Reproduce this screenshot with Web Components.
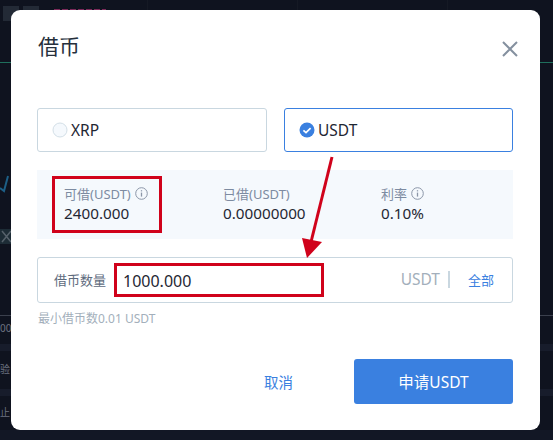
<!DOCTYPE html>
<html lang="zh">
<head>
<meta charset="utf-8">
<title>借币</title>
<style>
    html, body { margin: 0; padding: 0; background: #0f131f; }
    body { width: 553px; height: 440px; overflow: hidden; position: relative; font-family: "Noto Sans", "Noto Sans CJK SC", sans-serif; }
</style>
</head>
<body>
<trade-backdrop></trade-backdrop>
<borrow-dialog></borrow-dialog>

<script>
class TradeBackdrop extends HTMLElement {
    constructor() {
        super();
        this.shadow = this.attachShadow({ mode: 'open' });
    }

    connectedCallback() {
        this.shadow.innerHTML =
        `
        <style>
            :host {
                display: flex;
                flex-direction: column;
                width: 553px;
                height: 440px;
                overflow: hidden;
                background-color: #0f131f;
                background-image: linear-gradient(90deg, rgba(255,255,255,.025) 1px, transparent 1px);
                background-size: 150px 100%;
                background-position: 147px 0;
                font-family: "Noto Sans", "Noto Sans CJK SC", sans-serif;
                color: #6d7280;
            }
            .top { height: 62px; display: flex; gap: 4px; padding: 6px 0 0 3px; box-sizing: border-box; flex: none; }
            .tile { width: 16px; height: 15px; background: #232a36; }
            .price { margin-left: 11px; width: 52px; height: 3px; margin-top: 3px; background: repeating-linear-gradient(90deg, #7d2a5a 0 6px, transparent 6px 8px); }
            .green { height: 1px; background: #1f6f5c; flex: none; }
            .gap { flex: none; }
            .stroke { width: 11px; height: 20px; display: block; flex: none; }
            .xtile { width: 11px; height: 15px; display: block; flex: none; background: #1d2c36; }
            .rule { height: 1px; background: #3b404d; flex: none; }
            .band { height: 7px; background: #171c2b; flex: none; }
            .text { flex: none; font-size: 10px; line-height: 18px; white-space: nowrap; }
            .bottom { flex: 1; }
            .base { height: 10px; flex: none; background: #121725; }
        </style>
        <div class="top">
            <div class="tile"></div>
            <div class="tile"></div>
            <div class="price"></div>
        </div>
        <div class="green"></div>
        <div class="gap" style="height:110px"></div>
        <svg class="stroke" viewBox="0 0 11 20"><path d="M0 15 L4 18 L8 3" fill="none" stroke="#1d5f86" stroke-width="2"/></svg>
        <div class="gap" style="height:36px"></div>
        <svg class="xtile" viewBox="0 0 11 15"><path d="M2 2 L11 13 M11 2 L2 13" fill="none" stroke="#56616b" stroke-width="1.5"/></svg>
        <div class="gap" style="height:71px"></div>
        <div class="rule"></div>
        <div class="gap" style="height:3px"></div>
        <div class="text">00</div>
        <div class="gap" style="height:7px"></div>
        <div class="band"></div>
        <div class="gap" style="height:9px"></div>
        <div class="text">验</div>
        <div class="gap" style="height:11px"></div>
        <div class="band"></div>
        <div class="gap" style="height:7px"></div>
        <div class="text">止</div>
        <div class="bottom"></div>
        <div class="base"></div>`;
    }
}

class InfoIcon extends HTMLElement {
    constructor() {
        super();
        this.shadow = this.attachShadow({ mode: 'open' });
    }

    connectedCallback() {
        this.shadow.innerHTML =
        `
        <style>
            :host { display: inline-flex; width: 13px; height: 13px; margin-left: 4px; }
            svg { width: 13px; height: 13px; display: block; }
        </style>
        <svg viewBox="0 0 13 13" fill="none" stroke="#8b96a8">
            <circle cx="6.5" cy="6.5" r="5.8" stroke-width="1"/>
            <path d="M6.5 5.6V9.6" stroke-width="1.3"/>
            <path d="M6.5 3.2V4.4" stroke-width="1.3"/>
        </svg>`;
    }
}

class CoinCard extends HTMLElement {
    constructor() {
        super();
        this.shadow = this.attachShadow({ mode: 'open' });
    }

    connectedCallback() {
        const selected = this.hasAttribute('selected');
        const mark = selected
            ? `<svg viewBox="0 0 16 16"><circle cx="8" cy="8" r="7.5" fill="#3a80e0"/><path d="M4.4 8.3 L7 10.6 L11.6 6.2" fill="none" stroke="#fff" stroke-width="1.7"/></svg>`
            : `<svg viewBox="0 0 16 16"><circle cx="8" cy="8" r="7" fill="#f5f9fd" stroke="#d3dfe7"/></svg>`;

        this.shadow.innerHTML =
        `
        <style>
            :host {
                display: flex;
                align-items: center;
                box-sizing: border-box;
                height: 44px;
                padding-left: 14px;
                border: 1px solid ${selected ? '#3a80e0' : '#c9d7e0'};
                border-radius: 3px;
                background: #fff;
                color: #1f2733;
                font-size: 15.5px;
            }
            svg { width: 16px; height: 16px; margin-right: 3px; flex: none; }
        </style>
        ${mark}<slot></slot>`;
    }
}

class StatItem extends HTMLElement {
    constructor() {
        super();
        this.shadow = this.attachShadow({ mode: 'open' });
    }

    connectedCallback() {
        this.shadow.innerHTML =
        `
        <style>
            :host { display: block; }
            .label { display: flex; align-items: center; height: 20px; font-size: 13px; color: #7d8ba1; white-space: nowrap; }
            .value { height: 20px; line-height: 20px; font-size: 15.25px; color: #1f2733; white-space: nowrap; }
        </style>
        <div class="label"><slot name="label"></slot></div>
        <div class="value"><slot name="value"></slot></div>`;
    }
}

class AmountField extends HTMLElement {
    constructor() {
        super();
        this.shadow = this.attachShadow({ mode: 'open' });
    }

    connectedCallback() {
        this.shadow.innerHTML =
        `
        <style>
            :host {
                display: flex;
                align-items: center;
                box-sizing: border-box;
                height: 46px;
                padding: 0 18px 2px 16px;
                border: 1px solid #c9d7e0;
                border-radius: 3px;
                background: #fff;
            }
            .name { font-size: 13px; color: #5e6b7d; width: 69px; flex: none; white-space: nowrap; }
            .amount { flex: 1; font-size: 16px; color: #1f2733; margin-top: 4px; }
            .unit { font-size: 15.5px; color: #a3afbb; }
            .sep { width: 2px; height: 17px; background: #c9d7e0; margin: 0 18px 0 8px; }
            .all { font-size: 13px; color: #3a80e0; white-space: nowrap; }
        </style>
        <span class="name">借币数量</span>
        <span class="amount">1000.000</span>
        <span class="unit">USDT</span>
        <span class="sep"></span>
        <span class="all">全部</span>`;
    }
}

class BorrowDialog extends HTMLElement {
    constructor() {
        super();
        this.shadow = this.attachShadow({ mode: 'open' });
    }

    connectedCallback() {
        this.shadow.innerHTML =
        `
        <style>
            :host {
                position: absolute;
                left: 11px;
                top: 10px;
                box-sizing: border-box;
                width: 529px;
                height: 420px;
                padding: 0 27px 0 26px;
                background: #fff;
                border-radius: 9px;
                font-family: "Noto Sans", "Noto Sans CJK SC", sans-serif;
            }
            header {
                display: flex;
                justify-content: space-between;
                align-items: flex-start;
                height: 98px;
            }
            h2 { margin: 21px 0 0 1px; font-size: 21px; line-height: 30px; font-weight: 400; color: #262f3c; }
            .close { width: 16px; height: 16px; margin: 31px -5px 0 0; display: block; }
            .coins { display: grid; grid-template-columns: 230px 229px; gap: 17px; }
            .stats {
                display: grid;
                grid-template-columns: 159px 158px 1fr;
                box-sizing: border-box;
                height: 69px;
                margin-top: 18px;
                padding: 13px 0 0 27px;
                background: #f5f9fd;
            }
            amount-field { margin-top: 18px; }
            .hint { margin-top: 7px; padding-left: 1px; height: 18px; line-height: 18px; font-size: 12px; color: #a3afbb; white-space: nowrap; }
            footer { display: flex; justify-content: flex-end; align-items: center; margin-top: 31px; }
            .cancel { font-size: 14.5px; color: #3a80e0; margin-right: 61px; }
            .apply {
                display: flex;
                align-items: center;
                justify-content: center;
                width: 159px;
                height: 45px;
                background: #3a80e0;
                border-radius: 3px;
                color: #fff;
                font-size: 15.5px;
            }
            .mark { position: absolute; box-sizing: border-box; border: 3px solid #d0021b; }
            .arrow { position: absolute; left: 285px; top: 140px; width: 50px; height: 115px; overflow: visible; }
        </style>
        <header>
            <h2>借币</h2>
            <svg class="close" viewBox="0 0 16 16"><path d="M1 1 L15 15 M15 1 L1 15" fill="none" stroke="#84909f" stroke-width="2"/></svg>
        </header>
        <div class="coins">
            <coin-card>XRP</coin-card>
            <coin-card selected>USDT</coin-card>
        </div>
        <div class="stats">
            <stat-item>
                <span slot="label">可借(USDT)</span><info-icon slot="label"></info-icon>
                <span slot="value">2400.000</span>
            </stat-item>
            <stat-item>
                <span slot="label">已借(USDT)</span>
                <span slot="value">0.00000000</span>
            </stat-item>
            <stat-item>
                <span slot="label">利率</span><info-icon slot="label"></info-icon>
                <span slot="value">0.10%</span>
            </stat-item>
        </div>
        <amount-field></amount-field>
        <div class="hint">最小借币数0.01 USDT</div>
        <footer>
            <span class="cancel">取消</span>
            <div class="apply">申请USDT</div>
        </footer>
        <div class="mark" style="left:41px;top:166px;width:110px;height:57px"></div>
        <div class="mark" style="left:103px;top:253px;width:210px;height:34px"></div>
        <svg class="arrow" viewBox="0 0 50 115">
            <path d="M36 7 L15 92" fill="none" stroke="#d0021b" stroke-width="3"/>
            <path d="M6 88 L26 92 L11 108 Z" fill="#d0021b"/>
        </svg>`;
    }
}

customElements.define('trade-backdrop', TradeBackdrop);
customElements.define('info-icon', InfoIcon);
customElements.define('coin-card', CoinCard);
customElements.define('stat-item', StatItem);
customElements.define('amount-field', AmountField);
customElements.define('borrow-dialog', BorrowDialog);
</script>
</body>
</html>
